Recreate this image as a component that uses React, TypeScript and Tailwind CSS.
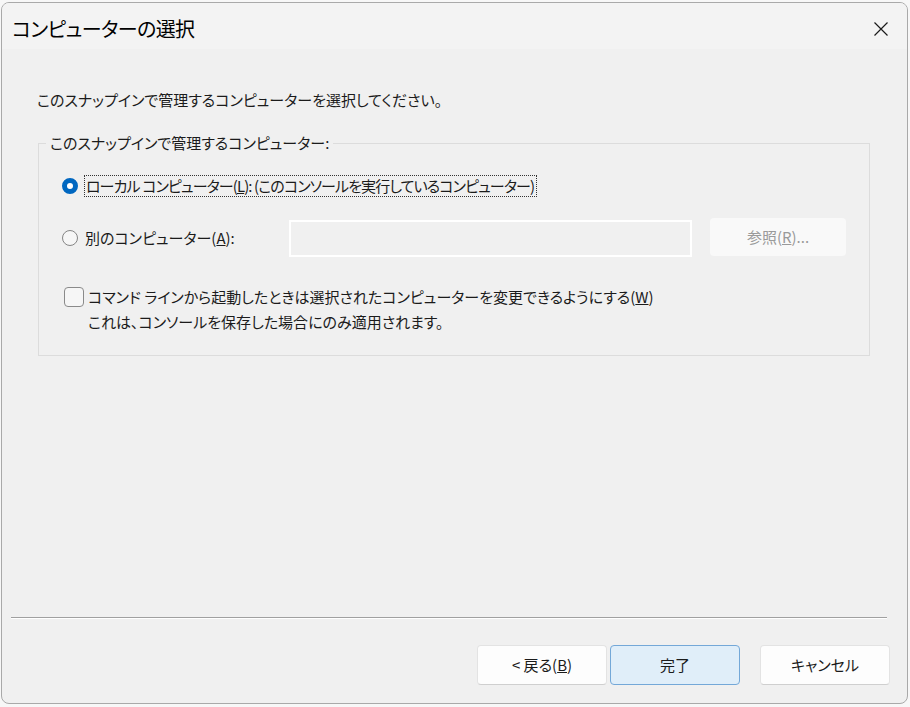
import React from 'react';

const jp = "font-['Noto_Sans_CJK_JP','Noto_Sans',sans-serif] [font-feature-settings:'palt']";

function Radio({ checked }: { checked: boolean }) {
  return checked ? (
    <span className="block w-[16px] h-[16px] rounded-full border-[5px] border-[#0067c0] bg-white shrink-0" />
  ) : (
    <span className="block w-[16px] h-[16px] rounded-full border border-[#858585] bg-[#f6f6f6] shrink-0" />
  );
}

function Button({ label, primary }: { label: React.ReactNode; primary?: boolean }) {
  return (
    <button
      className={
        'h-[40px] w-[130px] rounded-[4px] border text-[15px] text-[#1b1b1b] flex items-center justify-center ' +
        (primary
          ? 'bg-[#e0eef9] border-[#74a8d8]'
          : 'bg-[#fdfdfd] border-[#e3e3e3] border-b-[#cfcfcf]')
      }
    >
      {label}
    </button>
  );
}

export default function App() {
  return (
    <div className={`w-[910px] h-[707px] bg-[#f7f7f7] pt-[2px] pl-[1px] ${jp}`}>
      <div className="w-[907px] h-[702px] rounded-[8px] border border-[#a9a9a9] bg-[#f0f0f0] flex flex-col overflow-hidden">
        {/* title bar */}
        <div className="h-[46px] bg-[#f3f3f3] flex items-center justify-between pl-[10px] pr-[18px] shrink-0">
          <span className="text-[20px] tracking-[-0.6px] text-black leading-none mt-[6px]">コンピューターの選択</span>
          <svg width="16" height="16" viewBox="0 0 16 16" className="mt-[6px]">
            <path d="M1.5 1.5 L14.5 14.5 M14.5 1.5 L1.5 14.5" stroke="#1a1a1a" strokeWidth="1.2" />
          </svg>
        </div>

        {/* content */}
        <div className="flex-1 pl-[36px] pt-[41px] text-[15px] text-[#1b1b1b]">
          <div className="h-[20px] leading-[20px] -ml-[1px]">このスナップインで管理するコンピューターを選択してください。</div>

          <fieldset className="mt-[23px] w-[832px] h-[223px] border border-[#dcdcdc] pl-[23px]">
            <legend className="-ml-[16px] px-[4px] h-[20px] leading-[20px]">このスナップインで管理するコンピューター:</legend>

            <div className="mt-[21px] h-[24px] flex items-center">
              <Radio checked />
              <span className="ml-[6px] border border-dotted border-[#333] h-[22px] leading-[20px] pl-[1px] pr-[2px] tracking-[-0.9px]">
                ローカル コンピューター(<u>L</u>): (このコンソールを実行しているコンピューター)
              </span>
            </div>

            <div className="mt-[20px] h-[40px] flex items-center">
              <Radio checked={false} />
              <span className="ml-[7px] w-[204px]">
                別のコンピューター(<u>A</u>):
              </span>
              <div className="w-[403px] h-[37px] border-2 border-white bg-[#f0f0f0]" />
              <div className="ml-[18px] w-[136px] h-[38px] rounded-[4px] bg-[#f9f9f9] text-[#9a9a9a] flex items-center justify-center -mt-[2px]">
                参照(<u>R</u>)...
              </div>
            </div>

            <div className="mt-[29px] flex items-start">
              <span className="block w-[20px] h-[20px] rounded-[4px] border border-[#8a8a8a] bg-[#f6f6f6] ml-[2px] shrink-0" />
              <div className="ml-[4px] leading-[25px] -mt-[3px]">
                <div>コマンド ラインから起動したときは選択されたコンピューターを変更できるようにする(<u>W</u>)</div>
                <div>これは、コンソールを保存した場合にのみ適用されます。</div>
              </div>
            </div>
          </fieldset>
        </div>

        {/* separator */}
        <div className="ml-[9px] mr-[20px] border-t border-[#a0a0a0] border-b border-b-white shrink-0" />

        {/* footer */}
        <div className="h-[84px] shrink-0 flex items-start justify-end pt-[26px] pr-[17px]">
          <div className="flex gap-[3px]">
            <Button label={<span>&lt; 戻る(<u>B</u>)</span>} />
            <Button label="完了" primary />
          </div>
          <div className="ml-[20px]">
            <Button label="キャンセル" />
          </div>
        </div>
      </div>
    </div>
  );
}
